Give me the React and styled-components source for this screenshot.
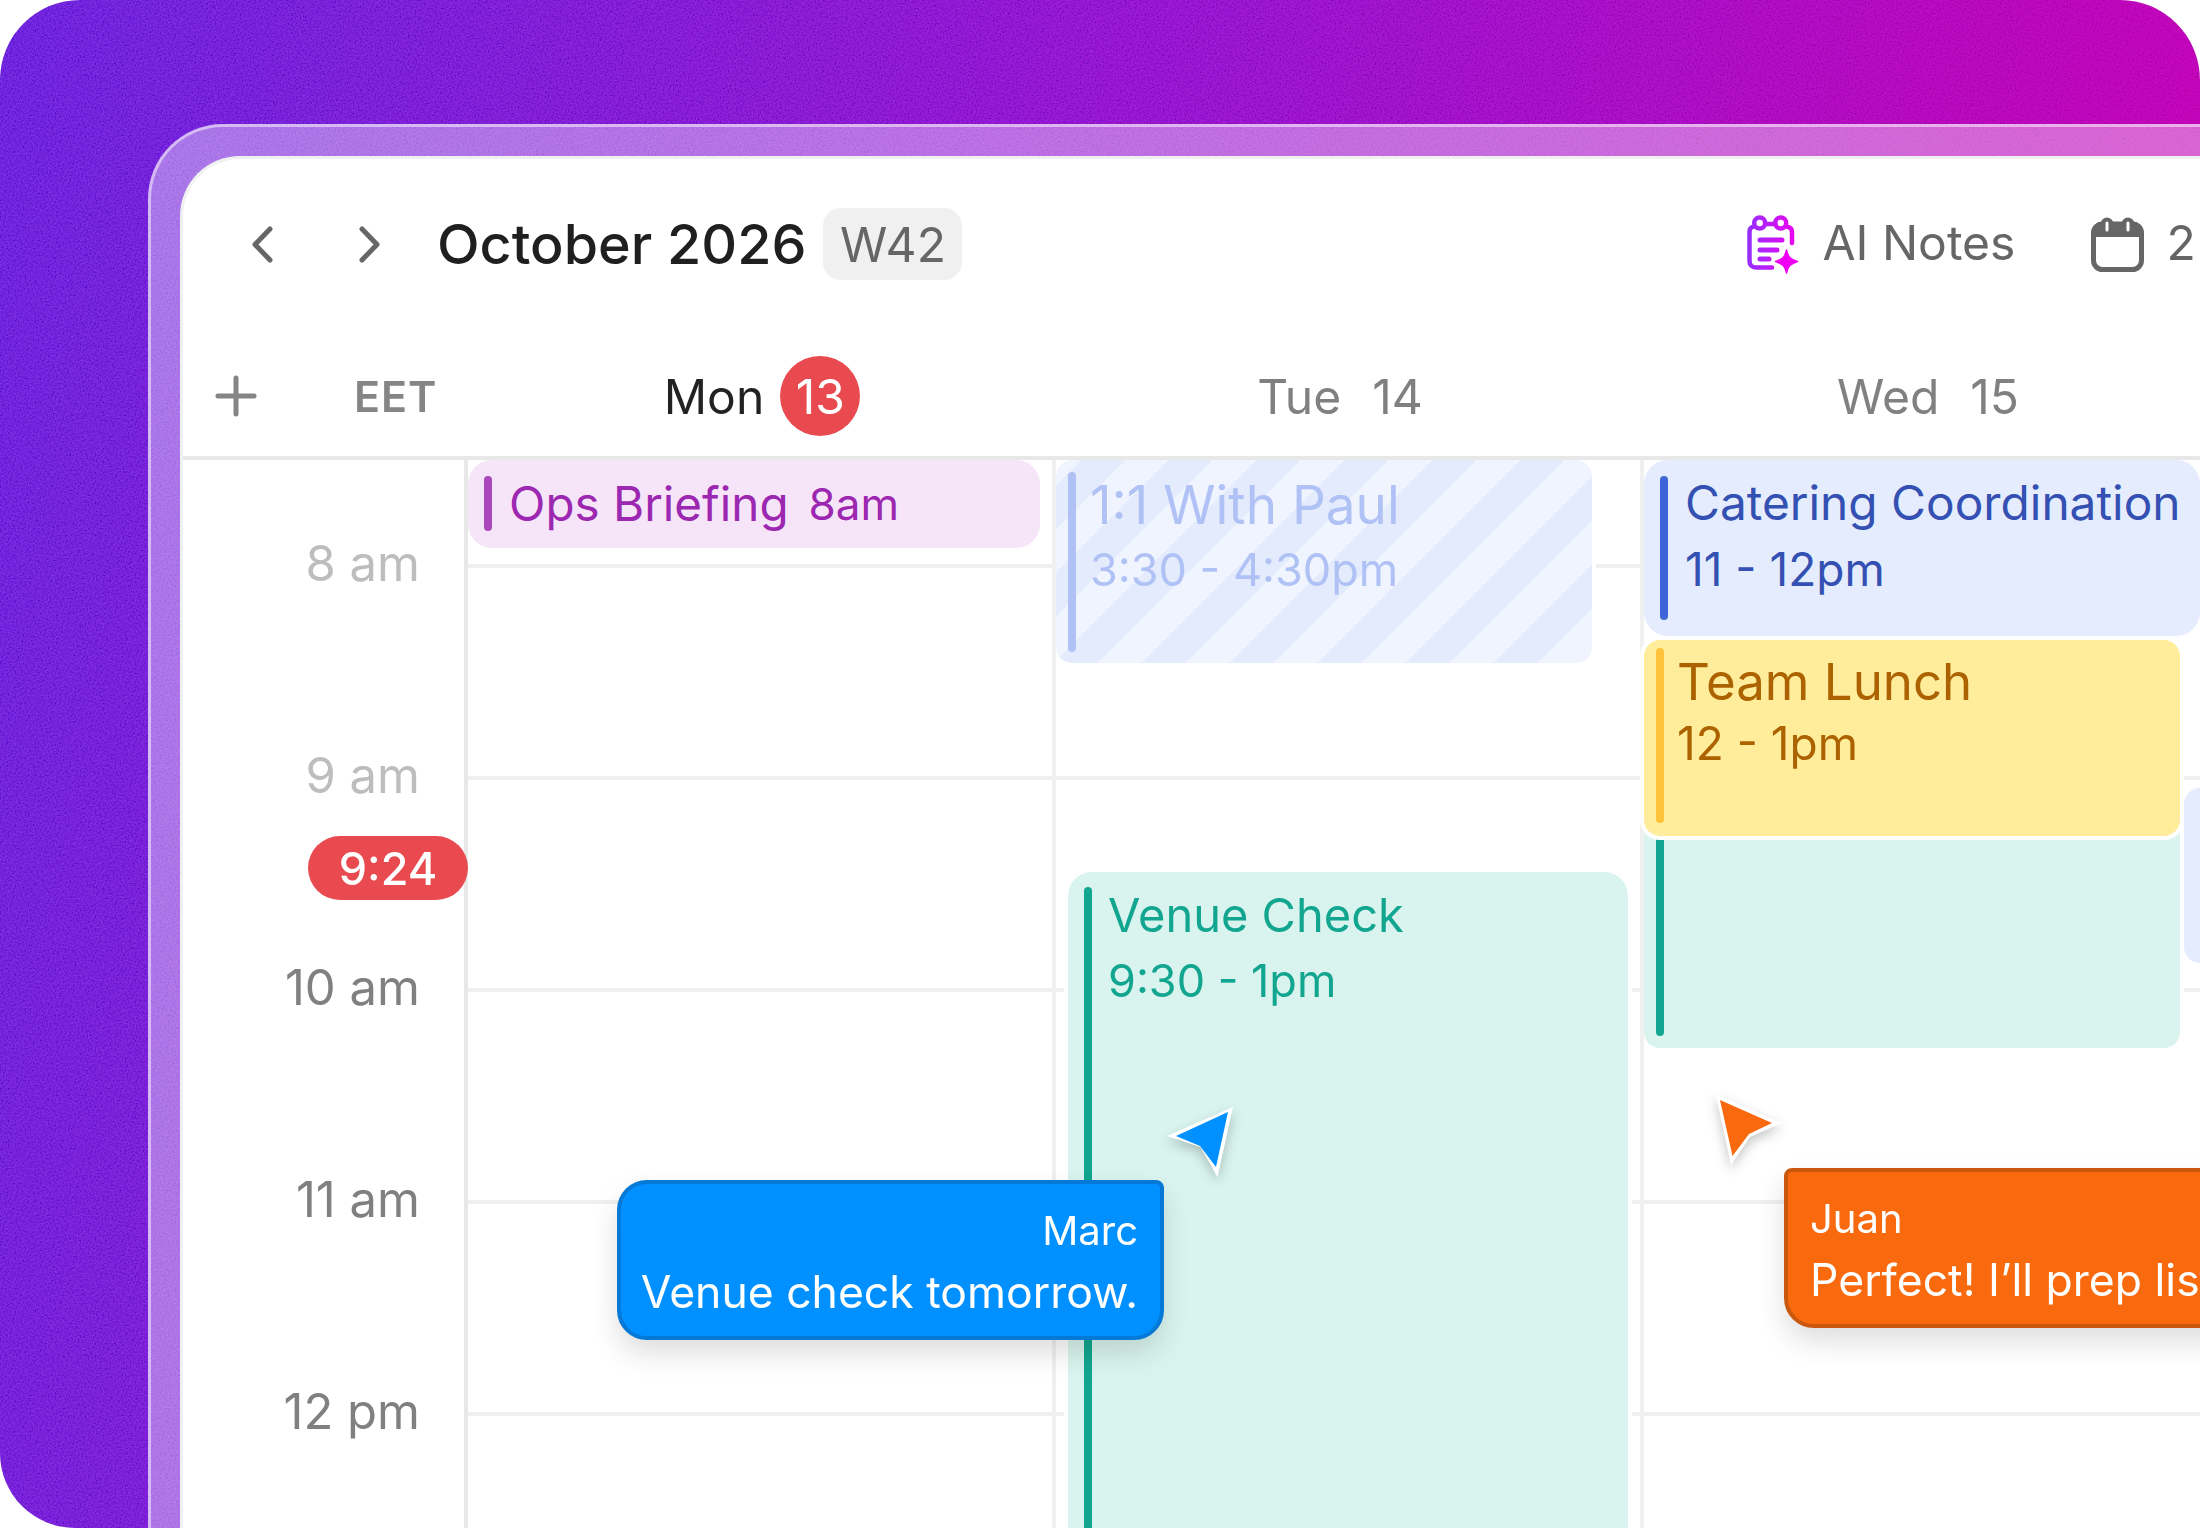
import styled, { createGlobalStyle } from "styled-components";

const GlobalStyle = createGlobalStyle`
    html, body {
        margin: 0;
        background: #fff;
    }
    * {
        box-sizing: border-box;
    }
`;

const Canvas = styled.div`
    position: relative;
    width: 2200px;
    height: 1528px;
    overflow: hidden;
    padding: 124px 0 0 148px;
    border-radius: 80px 80px 0 75px;
    background: linear-gradient(100deg, #681edb 0%, #9610cc 52%, #c900ae 100%);
    font-family: Inter, "Noto Sans", sans-serif;
`;

const Grain = styled.svg`
    position: absolute;
    inset: 0;
    width: 100%;
    height: 100%;
    opacity: 0.45;
    mix-blend-mode: soft-light;
`;

const Glass = styled.div`
    position: relative;
    height: 100%;
    padding: 29px 0 0 29px;
    border-top: 3px solid rgba(255, 255, 255, 0.5);
    border-left: 3px solid rgba(255, 255, 255, 0.5);
    border-radius: 75px 0 0 0;
    background: rgba(255, 255, 255, 0.38);
`;

const Panel = styled.div`
    height: 100%;
    overflow: hidden;
    border-top: 3px solid #f0f0f0;
    border-left: 3px solid #f0f0f0;
    border-radius: 60px 0 0 0;
    background: #fff;
`;

const Toolbar = styled.div`
    display: flex;
    align-items: center;
    height: 170px;
    padding-left: 68px;
`;

const NavIcon = styled.svg`
    flex: none;
    width: 22px;
    height: 37px;
    margin-right: ${(p) => p.$gap}px;
    fill: none;
    stroke: #666;
    stroke-width: 5;
    stroke-linecap: round;
    stroke-linejoin: round;
`;

const Month = styled.div`
    margin-bottom: 2px;
    font-size: 55.6px;
    font-weight: 500;
    color: #1f1f1f;
    white-space: nowrap;
`;

const WeekBadge = styled.div`
    flex: none;
    display: flex;
    align-items: center;
    justify-content: center;
    width: 139px;
    height: 72px;
    margin-left: 17px;
    border-radius: 18px;
    background: #f0f0f0;
    font-size: 48px;
    color: #666;
`;

const ToolbarRight = styled.div`
    display: flex;
    align-items: center;
    margin-left: 777px;
    font-size: 48px;
    color: #666;
    white-space: nowrap;
`;

const ToolItem = styled.div`
    flex: none;
    display: flex;
    align-items: center;
    gap: ${(p) => p.$gap}px;
    margin-right: ${(p) => p.$after}px;
`;

const ToolLabel = styled.span`
    margin-bottom: 3px;
`;

const ColumnsRow = styled.div`
    display: grid;
    grid-template-columns: 285px 588px 588px 588px;
    width: 2049px;
`;

const HeadRow = styled(ColumnsRow)`
    height: 127px;
    padding-top: 7px;
    align-items: center;
`;

const HeadDivider = styled.div`
    height: 4px;
    background: #e8e8e8;
`;

const ZoneCell = styled.div`
    display: flex;
    align-items: center;
    gap: 97px;
    padding-left: 32px;
    font-size: 43px;
    font-weight: 600;
    color: #858585;
    letter-spacing: 1px;
`;

const PlusIcon = styled.svg`
    width: 42px;
    height: 42px;
    fill: none;
    stroke: #858585;
    stroke-width: 5;
    stroke-linecap: round;
`;

const DayHead = styled.div`
    display: flex;
    align-items: center;
    justify-content: center;
    gap: ${(p) => (p.$today ? 16 : 31)}px;
    padding-right: ${(p) => (p.$today ? 0 : 20)}px;
    font-size: 48px;
    color: ${(p) => (p.$today ? "#222" : "#808080")};
`;

const TodayNumber = styled.div`
    display: flex;
    align-items: center;
    justify-content: center;
    width: 80px;
    height: 80px;
    border-radius: 50%;
    background: #e84a50;
    color: #fff;
`;

const Body = styled(ColumnsRow)`
    position: relative;
    height: 1070px;
`;

const TimeColumn = styled.div`
    position: relative;
    padding: 80px 44px 0 0;
    border-right: 4px solid #e8e8e8;
`;

const TimeLabel = styled.div`
    height: 212px;
    line-height: 48px;
    text-align: right;
    font-size: 49px;
    color: ${(p) => (p.$past ? "#bdbdbd" : "#808080")};
`;

const NowPill = styled.div`
    position: absolute;
    top: 376px;
    right: -4px;
    display: flex;
    align-items: center;
    justify-content: center;
    width: 160px;
    height: 64px;
    border-radius: 32px;
    background: #e84a50;
    color: #fff;
    font-size: 45px;
    font-weight: 500;
`;

const DayColumn = styled.div`
    position: relative;
    border-right: 4px solid #f0f0f0;
`;

const HourLine = styled.div`
    height: ${(p) => p.$height}px;
    border-bottom: 4px solid #f0f0f0;
`;

const Event = styled.div`
    position: absolute;
    top: ${(p) => p.$top}px;
    left: ${(p) => p.$left}px;
    display: flex;
    width: ${(p) => p.$width}px;
    height: ${(p) => p.$height}px;
    padding: ${(p) => p.$pad};
    gap: ${(p) => p.$gap}px;
    border-radius: ${(p) => p.$radius}px;
    background: ${(p) => p.$bg};
    color: ${(p) => p.$color};
    box-shadow: ${(p) => p.$ring || "none"};
    z-index: ${(p) => p.$z || 1};
`;

const StripedEvent = styled(Event)`
    background: repeating-linear-gradient(
        135deg,
        #eff4fe 0,
        #eff4fe 17.7px,
        #e4ebfc 17.7px,
        #e4ebfc 48.8px,
        #eff4fe 48.8px,
        #eff4fe 62.2px
    );
`;

const EventBar = styled.div`
    flex: none;
    width: 8px;
    border-radius: 4px;
    background: ${(p) => p.$color};
`;

const EventBody = styled.div`
    display: flex;
    flex-direction: column;
    min-width: 0;
    white-space: nowrap;
`;

const EventTitle = styled.div`
    font-size: ${(p) => p.$size}px;
    line-height: ${(p) => p.$line}px;
`;

const EventTime = styled.div`
    font-size: ${(p) => p.$size}px;
    line-height: ${(p) => p.$line}px;
`;

const InlineEventBody = styled.div`
    display: flex;
    align-items: center;
    gap: 20px;
    white-space: nowrap;
`;

const Bubble = styled.div`
    position: absolute;
    top: ${(p) => p.$top}px;
    left: ${(p) => p.$left}px;
    width: ${(p) => p.$width}px;
    height: 160px;
    padding: ${(p) => p.$pad};
    border: 4px solid ${(p) => p.$border};
    border-radius: ${(p) => p.$radius};
    background: ${(p) => p.$bg};
    color: #fff;
    text-align: ${(p) => p.$align};
    white-space: nowrap;
    box-shadow: 0 14px 28px rgba(0, 0, 0, 0.13);
    z-index: 5;
`;

const BubbleName = styled.div`
    font-size: 40px;
    line-height: 61px;
`;

const BubbleText = styled.div`
    font-size: 44.5px;
    line-height: 63px;
`;

const Cursor = styled.svg`
    position: absolute;
    top: ${(p) => p.$top}px;
    left: ${(p) => p.$left}px;
    width: 85px;
    height: 90px;
    filter: drop-shadow(0 5px 6px rgba(0, 0, 0, 0.22));
    z-index: 5;
`;

function NotesIcon() {
    return (
        <svg width="70" height="75" viewBox="0 0 70 75" fill="none">
            <defs>
                <linearGradient id="notes" x1="8" y1="40" x2="60" y2="40" gradientUnits="userSpaceOnUse">
                    <stop offset="0" stopColor="#9430ff" />
                    <stop offset="1" stopColor="#f200ee" />
                </linearGradient>
            </defs>
            <g stroke="url(#notes)" strokeWidth="4.5" strokeLinecap="round">
                <path d="M15 19.5C12 20 10.5 22 10.5 25V54C10.5 58 13 60.5 17 60.5H33" />
                <path d="M47.5 19.5C51 20 53 22 53 25V36" />
                <circle cx="20.7" cy="16" r="5.5" />
                <circle cx="41.7" cy="16" r="5.5" />
                <path d="M26 17H36.5" />
                <path d="M21 33H43M21 43H38M21 52H30" strokeWidth="5" />
            </g>
            <path
                d="M47.5 43C49 50 51 52 58.5 54.5C51 57 49 59 47.5 66C46 59 44 57 36.5 54.5C44 52 46 50 47.5 43Z"
                fill="#f000f0"
                stroke="#f000f0"
                strokeWidth="1.5"
                strokeLinejoin="round"
            />
        </svg>
    );
}

function CalendarIcon() {
    return (
        <svg width="53" height="55" viewBox="0 0 53 55" fill="none">
            <rect x="2.5" y="7" width="48" height="45.5" rx="9" stroke="#666" strokeWidth="5" />
            <path d="M3 20V12C3 8 6 5 10 5H43C47 5 50 8 50 12V20Z" fill="#666" />
            <circle cx="16" cy="7" r="6.5" fill="#666" />
            <circle cx="37" cy="7" r="6.5" fill="#666" />
            <path d="M16 6V13M37 6V13" stroke="#fff" strokeWidth="3" strokeLinecap="round" />
        </svg>
    );
}

const hours = [
    { label: "8 am", past: true },
    { label: "9 am", past: true },
    { label: "10 am" },
    { label: "11 am" },
    { label: "12 pm" },
];

function HourLines() {
    return (
        <>
            <HourLine $height={108} />
            <HourLine $height={212} />
            <HourLine $height={212} />
            <HourLine $height={212} />
            <HourLine $height={212} />
        </>
    );
}

const sideRing = "4px 0 0 #fff";
const fullRing = "0 0 0 4px #fff";

function App() {
    return (
        <>
            <GlobalStyle />
            <Canvas>
                <Grain>
                    <filter id="grain" x="0" y="0" width="100%" height="100%">
                        <feTurbulence type="fractalNoise" baseFrequency="0.6" numOctaves="2" />
                        <feColorMatrix
                            type="matrix"
                            values="1.6 0 0 0 -0.42 1.6 0 0 0 -0.42 1.6 0 0 0 -0.42 0 0 0 0 1"
                        />
                    </filter>
                    <rect width="100%" height="100%" filter="url(#grain)" />
                </Grain>
                <Glass>
                    <Panel>
                        <Toolbar>
                            <NavIcon viewBox="0 0 22 37" $gap={86}>
                                <path d="M19 3L4 18.5L19 34" />
                            </NavIcon>
                            <NavIcon viewBox="0 0 22 37" $gap={56}>
                                <path d="M3 3L18 18.5L3 34" />
                            </NavIcon>
                            <Month>October 2026</Month>
                            <WeekBadge>W42</WeekBadge>
                            <ToolbarRight>
                                <ToolItem $gap={13} $after={76}>
                                    <NotesIcon />
                                    <ToolLabel>AI Notes</ToolLabel>
                                </ToolItem>
                                <ToolItem $gap={22} $after={0}>
                                    <CalendarIcon />
                                    <ToolLabel>2 Events</ToolLabel>
                                </ToolItem>
                            </ToolbarRight>
                        </Toolbar>
                        <HeadRow>
                            <ZoneCell>
                                <PlusIcon viewBox="0 0 42 42">
                                    <path d="M21 3V39M3 21H39" />
                                </PlusIcon>
                                EET
                            </ZoneCell>
                            <DayHead $today>
                                Mon
                                <TodayNumber>13</TodayNumber>
                            </DayHead>
                            <DayHead>
                                <span>Tue</span>
                                <span>14</span>
                            </DayHead>
                            <DayHead>
                                <span>Wed</span>
                                <span>15</span>
                            </DayHead>
                        </HeadRow>
                        <HeadDivider />
                        <Body>
                            <TimeColumn>
                                {hours.map((hour) => (
                                    <TimeLabel key={hour.label} $past={hour.past}>
                                        {hour.label}
                                    </TimeLabel>
                                ))}
                                <NowPill>9:24</NowPill>
                            </TimeColumn>

                            <DayColumn>
                                <HourLines />
                                <Event
                                    $top={0}
                                    $left={0}
                                    $width={572}
                                    $height={88}
                                    $pad="16px 16px 17px"
                                    $gap={17}
                                    $radius={24}
                                    $bg="#f6e5f8"
                                    $color="#9c27b0"
                                >
                                    <EventBar $color="#ab47bc" />
                                    <InlineEventBody>
                                        <EventTitle $size={47.6} $line={56}>Ops Briefing</EventTitle>
                                        <EventTime $size={44} $line={56}>8am</EventTime>
                                    </InlineEventBody>
                                </Event>
                            </DayColumn>

                            <DayColumn>
                                <HourLines />
                                <StripedEvent
                                    $top={0}
                                    $left={0}
                                    $width={536}
                                    $height={203}
                                    $pad="12px 12px 11px"
                                    $gap={14}
                                    $radius={16}
                                    $color="#b0c2f5"
                                    $ring={sideRing}
                                >
                                    <EventBar $color="#b0c2f5" />
                                    <EventBody>
                                        <EventTitle $size={53} $line={67}>1:1 With Paul</EventTitle>
                                        <EventTime $size={45} $line={61}>3:30 - 4:30pm</EventTime>
                                    </EventBody>
                                </StripedEvent>
                                <Event
                                    $top={412}
                                    $left={12}
                                    $width={560}
                                    $height={720}
                                    $pad="15px 16px 0"
                                    $gap={16}
                                    $radius={24}
                                    $bg="#d9f4ee"
                                    $color="#12a58f"
                                    $ring={fullRing}
                                >
                                    <EventBar $color="#12a58f" />
                                    <EventBody>
                                        <EventTitle $size={47} $line={55}>Venue Check</EventTitle>
                                        <EventTime $size={45} $line={78}>9:30 - 1pm</EventTime>
                                    </EventBody>
                                </Event>
                            </DayColumn>

                            <DayColumn>
                                <HourLines />
                                <Event
                                    $top={0}
                                    $left={0}
                                    $width={556}
                                    $height={176}
                                    $pad="16px 16px"
                                    $gap={17}
                                    $radius={24}
                                    $bg="#e5ecfd"
                                    $color="#3350b2"
                                >
                                    <EventBar $color="#3f63d8" />
                                    <EventBody>
                                        <EventTitle $size={47.8} $line={54}>Catering Coordination</EventTitle>
                                        <EventTime $size={46} $line={78}>11 - 12pm</EventTime>
                                    </EventBody>
                                </Event>
                                <Event
                                    $top={328}
                                    $left={540}
                                    $width={40}
                                    $height={175}
                                    $pad="0"
                                    $gap={0}
                                    $radius={16}
                                    $bg="#e5ecfd"
                                    $color="#3350b2"
                                />
                                <Event
                                    $top={180}
                                    $left={0}
                                    $width={536}
                                    $height={408}
                                    $pad="12px 12px"
                                    $gap={0}
                                    $radius={16}
                                    $bg="#d9f4ee"
                                    $color="#12a58f"
                                    $ring={sideRing}
                                >
                                    <EventBar $color="#12a58f" />
                                </Event>
                                <Event
                                    $top={180}
                                    $left={0}
                                    $width={536}
                                    $height={196}
                                    $pad="8px 12px 13px"
                                    $gap={13}
                                    $radius={16}
                                    $bg="#ffed9b"
                                    $color="#ad6200"
                                    $ring={fullRing}
                                    $z={2}
                                >
                                    <EventBar $color="#fec33a" />
                                    <EventBody>
                                        <EventTitle $size={51} $line={67}>Team Lunch</EventTitle>
                                        <EventTime $size={46} $line={57}>12 - 1pm</EventTime>
                                    </EventBody>
                                </Event>
                            </DayColumn>

                            <Bubble
                                $top={720}
                                $left={434}
                                $width={547}
                                $pad="16px 22px 0 0"
                                $border="#0679d6"
                                $radius="30px 8px 30px 30px"
                                $bg="#0090ff"
                                $align="right"
                            >
                                <BubbleName>Marc</BubbleName>
                                <BubbleText>Venue check tomorrow.</BubbleText>
                            </Bubble>
                            <Cursor viewBox="0 0 85 90" $top={640} $left={977}>
                                <polygon points="73,7 7,36 40.5,47 57.5,77" fill="#fff" />
                                <polygon points="68,12 16,36 40,46 56,67" fill="#0090ff" />
                            </Cursor>
                            <Bubble
                                $top={708}
                                $left={1601}
                                $width={560}
                                $pad="16px 0 0 22px"
                                $border="#c9580e"
                                $radius="8px 0 0 30px"
                                $bg="#f9690e"
                                $align="left"
                            >
                                <BubbleName>Juan</BubbleName>
                                <BubbleText>Perfect! I’ll prep list.</BubbleText>
                            </Bubble>
                            <Cursor viewBox="0 0 85 90" $top={625} $left={1522}>
                                <polygon points="10.6,9 76.5,38 45,52 26,80" fill="#fff" />
                                <polygon points="15,15 67,38 44,49 27.5,71" fill="#f9690e" />
                            </Cursor>
                        </Body>
                    </Panel>
                </Glass>
            </Canvas>
        </>
    );
}

export default App;
